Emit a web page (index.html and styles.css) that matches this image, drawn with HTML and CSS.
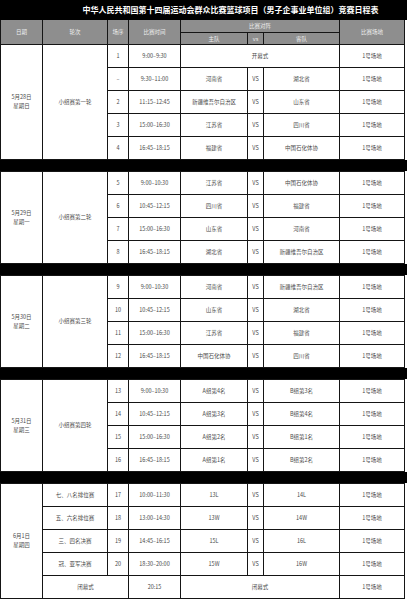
FILE: index.html
```html
<!DOCTYPE html>
<html lang="zh-CN">
<head>
<meta charset="utf-8">
<title>竞赛日程表</title>
<link rel="stylesheet" href="styles.css">
</head>
<body>
<div class="sheet">
  <div class="title">中华人民共和国第十四届运动会群众比赛篮球项目（男子企事业单位组）竞赛日程表</div>
  <div class="grid">
    <div class="h r2">日期</div>
    <div class="h r2">轮次</div>
    <div class="h r2">场序</div>
    <div class="h r2">比赛时间</div>
    <div class="h c3">比赛对阵</div>
    <div class="h r2">比赛场地</div>
    <div class="h">主队</div>
    <div class="h">vs</div>
    <div class="h">客队</div>

    <div class="c r5 day">5月28日<br>星期日</div>
    <div class="c r5">小组赛第一轮</div>
    <div class="c">1</div><div class="c">9:00–9:30</div><div class="c c3">开幕式</div><div class="c">1号场地</div>
    <div class="c">–</div><div class="c">9:30–11:00</div><div class="c">河南省</div><div class="c">VS</div><div class="c">湖北省</div><div class="c">1号场地</div>
    <div class="c">2</div><div class="c">11:15–12:45</div><div class="c">新疆维吾尔自治区</div><div class="c">VS</div><div class="c">山东省</div><div class="c">1号场地</div>
    <div class="c">3</div><div class="c">15:00–16:30</div><div class="c">江苏省</div><div class="c">VS</div><div class="c">四川省</div><div class="c">1号场地</div>
    <div class="c">4</div><div class="c">16:45–18:15</div><div class="c">福建省</div><div class="c">VS</div><div class="c">中国石化体协</div><div class="c">1号场地</div>

    <div class="band"></div>

    <div class="c r4 day">5月29日<br>星期一</div>
    <div class="c r4">小组赛第二轮</div>
    <div class="c">5</div><div class="c">9:00–10:30</div><div class="c">江苏省</div><div class="c">VS</div><div class="c">中国石化体协</div><div class="c">1号场地</div>
    <div class="c">6</div><div class="c">10:45–12:15</div><div class="c">四川省</div><div class="c">VS</div><div class="c">福建省</div><div class="c">1号场地</div>
    <div class="c">7</div><div class="c">15:00–16:30</div><div class="c">山东省</div><div class="c">VS</div><div class="c">河南省</div><div class="c">1号场地</div>
    <div class="c">8</div><div class="c">16:45–18:15</div><div class="c">湖北省</div><div class="c">VS</div><div class="c">新疆维吾尔自治区</div><div class="c">1号场地</div>

    <div class="band"></div>

    <div class="c r4 day">5月30日<br>星期二</div>
    <div class="c r4">小组赛第三轮</div>
    <div class="c">9</div><div class="c">9:00–10:30</div><div class="c">河南省</div><div class="c">VS</div><div class="c">新疆维吾尔自治区</div><div class="c">1号场地</div>
    <div class="c">10</div><div class="c">10:45–12:15</div><div class="c">山东省</div><div class="c">VS</div><div class="c">湖北省</div><div class="c">1号场地</div>
    <div class="c">11</div><div class="c">15:00–16:30</div><div class="c">江苏省</div><div class="c">VS</div><div class="c">福建省</div><div class="c">1号场地</div>
    <div class="c">12</div><div class="c">16:45–18:15</div><div class="c">中国石化体协</div><div class="c">VS</div><div class="c">四川省</div><div class="c">1号场地</div>

    <div class="band"></div>

    <div class="c r4 day">5月31日<br>星期三</div>
    <div class="c r4">小组赛第四轮</div>
    <div class="c">13</div><div class="c">9:00–10:30</div><div class="c">A组第4名</div><div class="c">VS</div><div class="c">B组第3名</div><div class="c">1号场地</div>
    <div class="c">14</div><div class="c">10:45–12:15</div><div class="c">A组第3名</div><div class="c">VS</div><div class="c">B组第4名</div><div class="c">1号场地</div>
    <div class="c">15</div><div class="c">15:00–16:30</div><div class="c">A组第2名</div><div class="c">VS</div><div class="c">B组第1名</div><div class="c">1号场地</div>
    <div class="c">16</div><div class="c">16:45–18:15</div><div class="c">A组第1名</div><div class="c">VS</div><div class="c">B组第2名</div><div class="c">1号场地</div>

    <div class="band"></div>

    <div class="c r5 day">6月1日<br>星期四</div>
    <div class="c">七、八名排位赛</div><div class="c">17</div><div class="c">10:00–11:30</div><div class="c">13L</div><div class="c">VS</div><div class="c">14L</div><div class="c">1号场地</div>
    <div class="c">五、六名排位赛</div><div class="c">18</div><div class="c">13:00–14:30</div><div class="c">13W</div><div class="c">VS</div><div class="c">14W</div><div class="c">1号场地</div>
    <div class="c">三、四名决赛</div><div class="c">19</div><div class="c">14:45–16:15</div><div class="c">15L</div><div class="c">VS</div><div class="c">16L</div><div class="c">1号场地</div>
    <div class="c">冠、亚军决赛</div><div class="c">20</div><div class="c">18:30–20:00</div><div class="c">15W</div><div class="c">VS</div><div class="c">16W</div><div class="c">1号场地</div>
    <div class="c c2">闭幕式</div><div class="c">20:15</div><div class="c c3">闭幕式</div><div class="c">1号场地</div>
  </div>
</div>
</body>
</html>
```

FILE: styles.css
```css
html, body {
  margin: 0;
  padding: 0;
  background: #ffffff;
}

.sheet {
  width: 407px;
  font-family: "Noto Sans CJK SC", "Liberation Sans", sans-serif;
}

.title {
  height: 20px;
  background: #000000;
  color: #ffffff;
  font-size: 8px;
  font-weight: 700;
  line-height: 20px;
  text-align: center;
  padding-left: 54px;
  white-space: nowrap;
  box-sizing: border-box;
}

.grid {
  width: 405px;
  box-sizing: border-box;
  display: grid;
  grid-template-columns: 41px 64px 20px 51px 66px 15px 75px 64px;
  grid-template-rows:
    12px 11px
    repeat(5, 22px) 11px
    repeat(4, 22px) 11px
    repeat(4, 22px) 11px
    repeat(4, 22px) 11px
    repeat(5, 22px);
  gap: 1px;
  padding: 0 1px 1px 1px;
  background: #151515;
}

.h {
  background: #8e8e8e;
  color: #eeeeee;
  font-size: 5.5px;
  display: flex;
  align-items: center;
  justify-content: center;
  white-space: nowrap;
}

.c {
  background: #ffffff;
  color: #4a4a4a;
  font-size: 5.5px;
  line-height: 9px;
  display: flex;
  align-items: center;
  justify-content: center;
  text-align: center;
  white-space: nowrap;
}

.r2 { grid-row: span 2; }
.r4 { grid-row: span 4; }
.r5 { grid-row: span 5; }
.c2 { grid-column: span 2; }
.c3 { grid-column: span 3; }

.band {
  grid-column: 1 / -1;
  background: #000000;
  margin-left: -1px;
  margin-right: -3px;
}
```
